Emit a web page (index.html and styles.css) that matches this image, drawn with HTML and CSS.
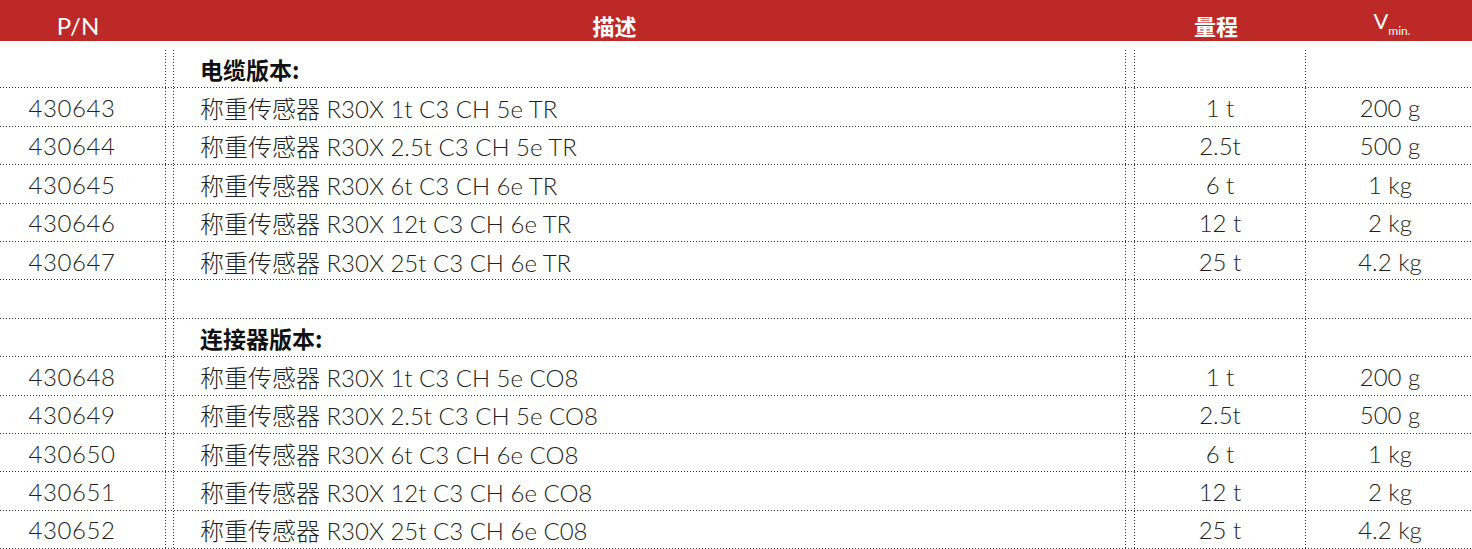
FILE: index.html
```html
<!DOCTYPE html>
<html lang="zh">
<head>
<meta charset="utf-8">
<link rel="stylesheet" href="styles.css">
</head>
<body>
<div class="sheet">
  <div class="head">
    <div class="h h-pn">P/N</div>
    <div class="h h-desc">描述</div>
    <div class="h h-range">量程</div>
    <div class="h h-v">V<sub>min.</sub></div>
  </div>
  <div class="body">
    <div class="row"><div class="c pn"></div><div class="gap"></div><div class="c desc sec">电缆版本:</div><div class="gap"></div><div class="c range"></div><div class="c v"></div></div>
    <div class="row"><div class="c pn">430643</div><div class="gap"></div><div class="c desc">称重传感器 R30X 1t C3 CH 5e TR</div><div class="gap"></div><div class="c range">1 t</div><div class="c v">200 g</div></div>
    <div class="row"><div class="c pn">430644</div><div class="gap"></div><div class="c desc">称重传感器 R30X 2.5t C3 CH 5e TR</div><div class="gap"></div><div class="c range">2.5t</div><div class="c v">500 g</div></div>
    <div class="row"><div class="c pn">430645</div><div class="gap"></div><div class="c desc">称重传感器 R30X 6t C3 CH 6e TR</div><div class="gap"></div><div class="c range">6 t</div><div class="c v">1 kg</div></div>
    <div class="row"><div class="c pn">430646</div><div class="gap"></div><div class="c desc">称重传感器 R30X 12t C3 CH 6e TR</div><div class="gap"></div><div class="c range">12 t</div><div class="c v">2 kg</div></div>
    <div class="row"><div class="c pn">430647</div><div class="gap"></div><div class="c desc">称重传感器 R30X 25t C3 CH 6e TR</div><div class="gap"></div><div class="c range">25 t</div><div class="c v">4.2 kg</div></div>
    <div class="row"><div class="c pn"></div><div class="gap"></div><div class="c desc"></div><div class="gap"></div><div class="c range"></div><div class="c v"></div></div>
    <div class="row"><div class="c pn"></div><div class="gap"></div><div class="c desc sec">连接器版本:</div><div class="gap"></div><div class="c range"></div><div class="c v"></div></div>
    <div class="row"><div class="c pn">430648</div><div class="gap"></div><div class="c desc">称重传感器 R30X 1t C3 CH 5e CO8</div><div class="gap"></div><div class="c range">1 t</div><div class="c v">200 g</div></div>
    <div class="row"><div class="c pn">430649</div><div class="gap"></div><div class="c desc">称重传感器 R30X 2.5t C3 CH 5e CO8</div><div class="gap"></div><div class="c range">2.5t</div><div class="c v">500 g</div></div>
    <div class="row"><div class="c pn">430650</div><div class="gap"></div><div class="c desc">称重传感器 R30X 6t C3 CH 6e CO8</div><div class="gap"></div><div class="c range">6 t</div><div class="c v">1 kg</div></div>
    <div class="row"><div class="c pn">430651</div><div class="gap"></div><div class="c desc">称重传感器 R30X 12t C3 CH 6e CO8</div><div class="gap"></div><div class="c range">12 t</div><div class="c v">2 kg</div></div>
    <div class="row"><div class="c pn">430652</div><div class="gap"></div><div class="c desc">称重传感器 R30X 25t C3 CH 6e C08</div><div class="gap"></div><div class="c range">25 t</div><div class="c v">4.2 kg</div></div>
  </div>
</div>
</body>
</html>
```
FILE: styles.css
```css
html, body {
  margin: 0;
  padding: 0;
  background: #fff;
}
body {
  font-family: "Lato", "Noto Sans CJK SC", sans-serif;
  color: #231f20;
  overflow: hidden;
}
.sheet {
  width: 1472px;
}
.head {
  display: grid;
  grid-template-columns: 166px 7px 953px 8px 172px 166px;
  height: 41px;
  background: #bd2926;
  color: #fff;
  align-items: center;
  font-size: 24px;
}
.h {
  text-align: center;
  line-height: 41px;
}
.h-pn {
  grid-column: 1;
  padding-right: 10px;
  font-weight: 400;
}
.h-desc {
  grid-column: 3;
  font-weight: bold;
  padding-right: 70px;
  font-family: "Noto Sans CJK SC", sans-serif;
  font-size: 22px;
}
.h-range {
  grid-column: 5;
  font-weight: bold;
  padding-right: 8px;
  font-family: "Noto Sans CJK SC", sans-serif;
  font-size: 22px;
}
.h-v {
  grid-column: 6;
  font-size: 22px;
  padding-left: 6px;
}
.h-v sub {
  font-size: 12px;
  vertical-align: -6px;
}
.body {
  padding-top: 9px;
}
.row {
  display: grid;
  grid-template-columns: 166px 7px 953px 8px 172px 166px;
  height: 38.4px;
  font-size: 24px;
  font-weight: 300;
  background-image: linear-gradient(to right, #333 1px, transparent 1px);
  background-size: 3px 1px;
  background-repeat: repeat-x;
  background-position: 0 bottom;
}
.c {
  display: flex;
  align-items: center;
  white-space: nowrap;
  background-repeat: repeat-y;
  background-size: 1px 3px;
}
.pn {
  justify-content: center;
  padding-right: 22px;
  letter-spacing: 0.6px;
  background-image: linear-gradient(to bottom, #333 1px, transparent 1px);
  background-position: right 0;
}
.desc {
  padding-left: 27px;
  background-image: linear-gradient(to bottom, #333 1px, transparent 1px), linear-gradient(to bottom, #333 1px, transparent 1px);
  background-position: left 0, right 0;
  background-repeat: repeat-y, repeat-y;
  background-size: 1px 3px, 1px 3px;
}
.sec {
  font-weight: bold;
  font-family: "Noto Sans CJK SC", sans-serif;
  font-size: 23px;
  color: #111;
}
.range {
  justify-content: center;
  background-image: linear-gradient(to bottom, #333 1px, transparent 1px), linear-gradient(to bottom, #333 1px, transparent 1px);
  background-position: left 0, right 0;
  background-repeat: repeat-y, repeat-y;
  background-size: 1px 3px, 1px 3px;
}
.v {
  justify-content: center;
  padding-left: 2px;
}
```
